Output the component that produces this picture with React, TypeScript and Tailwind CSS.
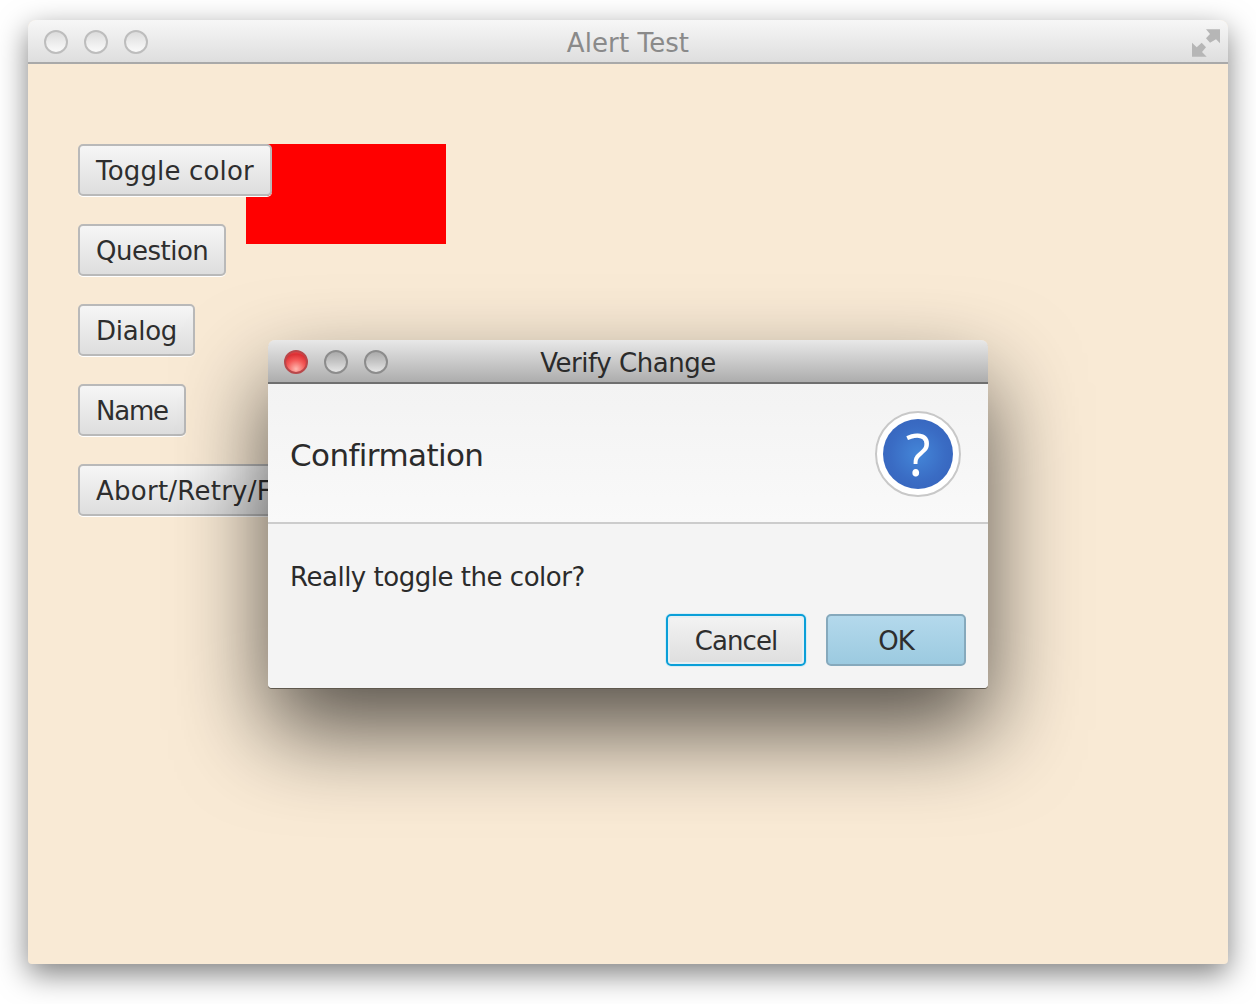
const font = "font-['DejaVu_Sans','Liberation_Sans',sans-serif]";

function Light({ tone }: { tone: "idle" | "dim" | "red" }) {
  const cls =
    tone === "red"
      ? "border-[#b9474a] bg-[radial-gradient(circle_at_50%_85%,#ffb8b0_0%,#f45a58_45%,#dc3034_75%,#e85a5c_100%)]"
      : tone === "dim"
        ? "border-[#8c8c8c] bg-[linear-gradient(to_bottom,#ababab_0%,#c6c6c6_50%,#e6e6e6_100%)]"
        : "border-[#bdbdbd] bg-[linear-gradient(to_bottom,#dcdcdc_0%,#ececec_50%,#fafafa_100%)]";
  return <span className={`mt-[2px] h-6 w-6 rounded-full border-2 ${cls}`} />;
}

function TitleBar({ title, active }: { title: string; active?: boolean }) {
  return (
    <div
      className={
        active
          ? "relative flex h-11 shrink-0 items-center gap-4 border-b-2 border-[#6f6f6f] bg-[linear-gradient(to_bottom,#e8e8e8,#adadad)] pl-4"
          : "relative flex h-11 shrink-0 items-center gap-4 border-b-2 border-[#a9a9a9] bg-[linear-gradient(to_bottom,#f7f7f7,#dedede)] pl-4"
      }
    >
      <Light tone={active ? "red" : "idle"} />
      <Light tone={active ? "dim" : "idle"} />
      <Light tone={active ? "dim" : "idle"} />
      <span
        className={`absolute inset-x-0 top-[8px] text-center text-[26px] leading-[30px] ${
          active ? "tracking-[-0.45px] text-[#2b2b2b]" : "tracking-[0.1px] text-[#8a8a8a]"
        }`}
      >
        {title}
      </span>
    </div>
  );
}

function Btn({ label, className = "" }: { label: string; className?: string }) {
  return (
    <button
      type="button"
      className={`h-[52px] rounded-[5px] border-2 border-[#b9b9b9] bg-[linear-gradient(to_bottom,#f6f6f6,#dedede)] px-4 pt-[2px] text-left text-[26px] leading-none whitespace-nowrap text-[#2e2e2e] shadow-[0_1px_0_#ffffff] ${className}`}
    >
      {label}
    </button>
  );
}

export default function App() {
  return (
    <div className={`h-[1004px] w-[1256px] overflow-hidden bg-white pt-5 pl-7 ${font}`}>
      <div className="relative flex h-[944px] w-[1200px] flex-col rounded-t-[8px] rounded-b-[4px] bg-[#f9ead5] shadow-[0_10px_30px_rgba(0,0,0,0.5)]">
        <div className="overflow-hidden rounded-t-[8px]">
          <TitleBar title="Alert Test" />
        </div>
        <svg className="absolute top-[8px] right-[7px]" width="30" height="30" viewBox="0 0 30 30" fill="#b6b6b6">
          <path d="M15 1.3H29V15.3L25 11.3L19 14.7L15 10.3L19 6Z" />
          <path d="M1 14.7V28.7H15.7L11 24L15 19.3L10.7 14.7L5.7 19.3Z" />
        </svg>

        <div className="absolute top-[124px] left-[218px] h-[100px] w-[200px] bg-[#ff0000]" />

        <div className="relative flex flex-col items-start gap-7 pt-20 pl-[50px]">
          <Btn label="Toggle color" className="tracking-[0.17px]" />
          <Btn label="Question" className="tracking-[-0.5px]" />
          <Btn label="Dialog" className="tracking-[-0.3px]" />
          <Btn label="Name" className="tracking-[-1.2px]" />
          <Btn label="Abort/Retry/Fail" className="tracking-[0.25px]" />
        </div>

        <div className="absolute top-[320px] left-[240px] flex h-[348px] w-[720px] flex-col overflow-hidden rounded-t-[7px] rounded-b-[4px] shadow-[0_1px_0_#5f584d,0_42px_90px_rgba(0,0,0,0.66)]">
          <TitleBar title="Verify Change" active />
          <div className="flex h-[140px] shrink-0 items-center justify-between border-b-2 border-[#cccccc] bg-[linear-gradient(to_bottom,#f3f3f3,#f9f9f9)] pt-[2px] pr-[27px] pl-[22px]">
            <span className="pt-[2px] text-[31px] leading-none tracking-[-0.6px] text-[#2b2b2b]">Confirmation</span>
            <div className="flex h-[86px] w-[86px] items-center justify-center rounded-full border-2 border-[#c8c8c8] bg-white">
              <div className="flex h-[70px] w-[70px] items-center justify-center rounded-full bg-[radial-gradient(circle,#4486d8_0%,#3a6cc4_55%,#3560b8_100%)] font-['Open_Sans',sans-serif] text-[58px] leading-none text-white">
                ?
              </div>
            </div>
          </div>
          <div className="flex flex-1 flex-col bg-[#f4f4f4] pt-[36px] pr-[22px] pl-[22px]">
            <span className="text-[26px] leading-[34px] tracking-[-0.48px] text-[#2b2b2b]">Really toggle the color?</span>
            <div className="mt-[20px] flex justify-end gap-5">
              <button
                type="button"
                className="h-[52px] w-[140px] rounded-[5px] border-2 border-[#0a9fd8] bg-[linear-gradient(to_bottom,#f3f3f3,#dedede)] pt-[2px] text-[26px] leading-none tracking-[-0.9px] text-[#2e2e2e] shadow-[0_0_0_1px_#d8edf5,inset_0_0_0_2px_#e6eff3]"
              >
                Cancel
              </button>
              <button
                type="button"
                className="h-[52px] w-[140px] rounded-[5px] border-2 border-[#86a9bc] bg-[linear-gradient(to_bottom,#b4d9ec,#9ccae0)] pt-[2px] text-[26px] leading-none tracking-[-1px] text-[#2e2e2e]"
              >
                OK
              </button>
            </div>
          </div>
        </div>
      </div>
    </div>
  );
}
